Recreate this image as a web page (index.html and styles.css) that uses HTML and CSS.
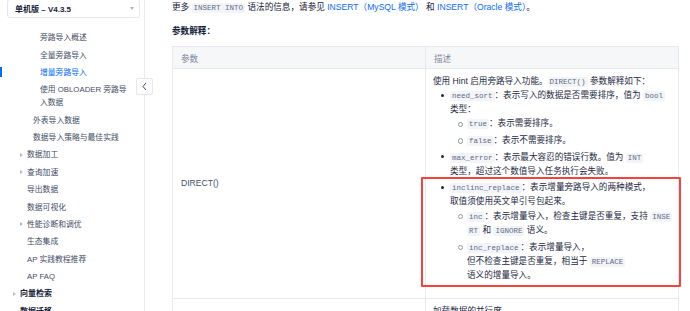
FILE: index.html
```html
<!DOCTYPE html>
<html lang="zh-CN">
<head>
<meta charset="utf-8">
<title>增量旁路导入</title>
<link rel="stylesheet" href="styles.css">
</head>
<body>
<div class="page">
  <aside class="sidebar">
    <div class="select">
      <span class="select-text">单机版 – V4.3.5</span>
      <span class="select-arrow"></span>
    </div>
    <ul class="nav">
      <li class="l3">旁路导入概述</li>
      <li class="l3">全量旁路导入</li>
      <li class="l3 active">增量旁路导入</li>
      <li class="l3">使用 OBLOADER 旁路导<br>入数据</li>
      <li class="l2">外表导入数据</li>
      <li class="l2">数据导入策略与最佳实践</li>
      <li class="l1 has-caret">数据加工</li>
      <li class="l1 has-caret">查询加速</li>
      <li class="l1">导出数据</li>
      <li class="l1">数据可视化</li>
      <li class="l1 has-caret">性能诊断和调优</li>
      <li class="l1">生态集成</li>
      <li class="l1">AP 实践教程推荐</li>
      <li class="l1">AP FAQ</li>
      <li class="l0 has-caret">向量检索</li>
      <li class="l0">数据迁移</li>
    </ul>
    <button class="collapse" aria-label="收起">
      <svg width="7" height="9" viewBox="0 0 7 9"><path d="M5 1 L2 4.5 L5 8" fill="none" stroke="#3b4863" stroke-width="1"/></svg>
    </button>
  </aside>
  <main class="main">
    <p class="intro">更多 <code>INSERT INTO</code> 语法的信息，请参见 <a class="link">INSERT（MySQL 模式）</a> 和 <a class="link">INSERT（Oracle 模式）</a>。</p>
    <p class="label">参数解释：</p>
    <table class="params">
      <thead>
        <tr><th class="c1">参数</th><th class="c2">描述</th></tr>
      </thead>
      <tbody>
        <tr>
          <td class="c1 name">DIRECT()</td>
          <td class="c2 desc">
            <div class="line">使用 Hint 启用旁路导入功能。<code>DIRECT()</code> 参数解释如下：</div>
            <ul class="dots">
              <li><code>need_sort</code>：表示写入的数据是否需要排序，值为 <code>bool</code><br>类型：
                <ul class="circles">
                  <li><code>true</code>：表示需要排序。</li>
                  <li><code>false</code>：表示不需要排序。</li>
                </ul>
              </li>
              <li><code>max_error</code>：表示最大容忍的错误行数。值为 <code>INT</code><br>类型，超过这个数值导入任务执行会失败。</li>
              <li><code>inclinc_replace</code>：表示增量旁路导入的两种模式，<br>取值须使用英文单引号包起来。
                <ul class="circles">
                  <li><code>inc</code>：表示增量导入，检查主键是否重复，支持 <code>INSE</code><br><code>RT</code> 和 <code>IGNORE</code> 语义。</li>
                  <li><code>inc_replace</code>：表示增量导入，<br>但不检查主键是否重复，相当于 <code>REPLACE</code><br>语义的增量导入。</li>
                </ul>
              </li>
            </ul>
          </td>
        </tr>
        <tr>
          <td class="c1 name"></td>
          <td class="c2 desc last"><div class="line">加载数据的并行度</div></td>
        </tr>
      </tbody>
    </table>
  </main>
</div>
<div class="highlight"></div>
</body>
</html>
```

FILE: styles.css
```css
* { box-sizing: border-box; }
html, body { margin: 0; padding: 0; }
body {
  width: 690px;
  height: 311px;
  overflow: hidden;
  background: #fff;
  font-family: "Liberation Sans", "Noto Sans CJK SC", sans-serif;
  color: #132039;
}
.page {
  display: flex;
  height: 311px;
}
.sidebar {
  position: relative;
  width: 145px;
  flex: none;
  border-right: 1px solid #e8ebf0;
}
.select {
  margin: -1px 4px 0 7px;
  height: 19px;
  border: 1px solid #e4e7ee;
  border-radius: 3px;
  display: flex;
  align-items: center;
  justify-content: space-between;
  padding: 0 5px 0 7px;
  background: #fff;
}
.select-text {
  font-size: 8px;
  font-weight: bold;
  color: #132039;
}
.select-arrow {
  width: 0;
  height: 0;
  border-left: 2.5px solid transparent;
  border-right: 2.5px solid transparent;
  border-top: 3px solid #aab3c4;
}
.nav {
  list-style: none;
  margin: 11px 0 0;
  padding: 0;
}
.nav li {
  font-size: 7.8px;
  line-height: 13px;
  padding: 2.2px 0;
  color: #3f4d67;
  position: relative;
  white-space: nowrap;
}
.nav .l3 { padding-left: 40px; }
.nav .l2 { padding-left: 33px; }
.nav .l1 { padding-left: 27px; }
.nav .l0 { padding-left: 20px; font-weight: bold; color: #132039; font-size: 8px; }
.nav .active { color: #006aff; }
.nav .active::after {
  content: "";
  position: absolute;
  left: 0;
  top: 3px;
  width: 1.5px;
  height: 10px;
  background: #006aff;
}
.nav .has-caret::before {
  content: "";
  position: absolute;
  top: 6.5px;
  width: 0;
  height: 0;
  border-top: 2px solid transparent;
  border-bottom: 2px solid transparent;
  border-left: 3px solid #b4bccb;
}
.nav .l1.has-caret::before { left: 20px; }
.nav .l0.has-caret::before { left: 13px; }
.collapse {
  position: absolute;
  left: 136px;
  top: 78px;
  width: 17px;
  height: 17px;
  padding: 0;
  border: 1px solid #e4e7ee;
  border-radius: 2px;
  background: #fff;
  display: flex;
  align-items: center;
  justify-content: center;
}
.main {
  flex: 1;
  padding-left: 27px;
  font-size: 8.6px;
}
.intro {
  margin: 0;
  line-height: 14px;
  white-space: nowrap;
  color: #132039;
}
.link { color: #0a6cff; text-decoration: none; }
code {
  font-family: "Liberation Mono", monospace;
  font-size: 7.5px;
  line-height: 1;
  color: #5c6b8a;
  background: #f2f4f7;
  border-radius: 2px;
  padding: 1px 2px;
}
.label {
  margin: 10px 0 0;
  line-height: 14px;
  font-weight: bold;
}
.params {
  margin-top: 8px;
  width: 507px;
  border-collapse: collapse;
  table-layout: fixed;
}
.params th, .params td {
  border: 1px solid #e6e9ef;
  text-align: left;
  vertical-align: middle;
}
.params .c1 { width: 253px; }
.params th {
  background: #f6f7f9;
  font-weight: normal;
  color: #7d889e;
  height: 22px;
  padding: 0 8px;
}
.params td.name {
  padding: 0 8px;
  color: #434f68;
}
.params td.desc {
  padding: 5px 7px 16px;
  vertical-align: top;
  color: #1e2a44;
  white-space: nowrap;
}
.params td.desc.last { padding-top: 5px; }
.line { line-height: 14px; }
.dots, .circles {
  list-style: none;
  margin: 0;
  padding: 0 0 0 17px;
}
.dots > li, .circles > li {
  position: relative;
  line-height: 14.1px;
}
.dots > li + li { margin-top: 2.5px; }
.circles > li + li { margin-top: 2.8px; }
.dots > li::before {
  content: "";
  position: absolute;
  left: -9px;
  top: 5.7px;
  width: 3px;
  height: 3px;
  border-radius: 50%;
  background: #1e2a44;
}
.circles > li::before {
  content: "";
  position: absolute;
  left: -9px;
  top: 5.4px;
  width: 3.4px;
  height: 3.4px;
  border-radius: 50%;
  border: 0.7px solid #8d97aa;
  background: #fff;
}
.highlight {
  position: absolute;
  left: 421px;
  top: 177px;
  width: 260px;
  height: 110px;
  border: 2px solid #f4423f;
  border-radius: 1px;
  pointer-events: none;
}
```
